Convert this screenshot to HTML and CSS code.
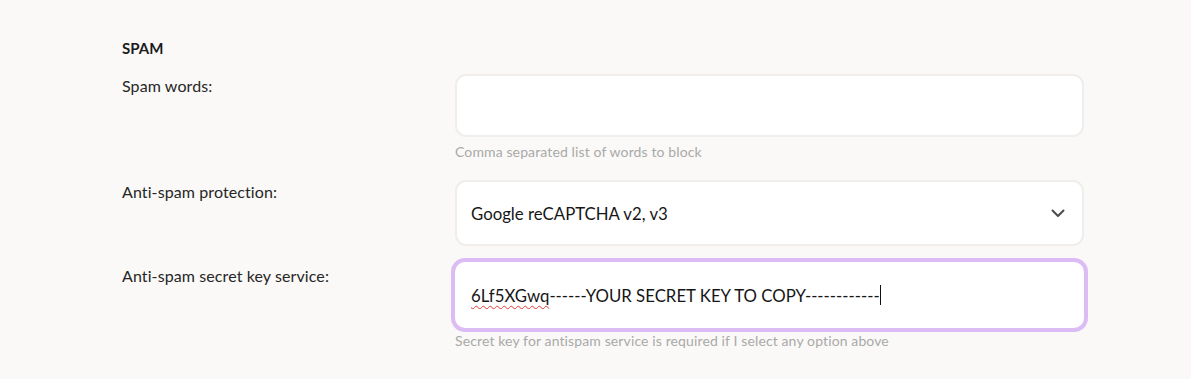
FILE: index.html
```html
<!DOCTYPE html>
<html>
<head>
<meta charset="utf-8">
<link rel="stylesheet" href="styles.css">
</head>
<body>
<div class="page">
  <div class="section-title">SPAM</div>
  <div class="row">
    <div class="label">Spam words:</div>
    <div class="field">
      <div class="box box-text"></div>
      <div class="help">Comma separated list of words to block</div>
    </div>
  </div>
  <div class="row">
    <div class="label label-select">Anti-spam protection:</div>
    <div class="field">
      <div class="box box-select">
        <span class="value">Google reCAPTCHA v2, v3</span>
        <svg class="chev" width="14" height="9" viewBox="0 0 14 9"><path d="M1.5 1.5 L7 7 L12.5 1.5" fill="none" stroke="#4a4a4a" stroke-width="2" stroke-linecap="round" stroke-linejoin="round"/></svg>
      </div>
    </div>
  </div>
  <div class="row">
    <div class="label label-key">Anti-spam secret key service:</div>
    <div class="field">
      <div class="box box-focus">
        <span class="value"><span class="misspelled">6Lf5XGwq</span>------YOUR SECRET KEY TO COPY------------</span><span class="caret"></span>
      </div>
      <div class="help help-key">Secret key for antispam service is required if I select any option above</div>
    </div>
  </div>
</div>
</body>
</html>
```

FILE: styles.css
```css
html, body {
  margin: 0;
  padding: 0;
  background: #faf9f7;
}
body {
  font-family: "Lato", "Liberation Sans", sans-serif;
  color: #1f1f1f;
  width: 1191px;
  height: 379px;
  overflow: hidden;
}
.page {
  padding: 38px 0 0 122px;
}
.section-title {
  font-size: 15px;
  font-weight: 700;
  line-height: 20px;
  color: #1c1c1c;
  margin-bottom: 16px;
}
.row {
  display: grid;
  grid-template-columns: 333px 629px;
  margin-bottom: 18px;
}
.label {
  font-size: 16px;
  line-height: 20px;
  color: #262626;
  letter-spacing: 0.1px;
  padding-top: 2px;
}
.label-key {
  padding-top: 2px;
}
.box {
  box-sizing: border-box;
  background: #fff;
  border: 2px solid #efeeec;
  border-radius: 11px;
  display: flex;
  align-items: center;
  padding: 0 14px;
  font-size: 16.8px;
  color: #161616;
}
.box-text {
  height: 63px;
}
.box-select {
  height: 66px;
  justify-content: space-between;
}
.chev {
  margin-right: 3px;
}
.box-focus {
  height: 66px;
  margin-top: -2px;
  border-color: #ffffff;
  box-shadow: 0 0 0 4px #dcbcf4;
  border-radius: 10px;
}
.misspelled {
  text-decoration: underline wavy #e53935;
  text-decoration-thickness: 1px;
  text-underline-offset: 3px;
}
.caret {
  display: inline-block;
  width: 1px;
  height: 20px;
  background: #111;
}
.help {
  font-size: 14px;
  letter-spacing: 0.12px;
  line-height: 20px;
  color: #a9a9a9;
  margin-top: 5px;
}
.help-key {
  margin-top: 3px;
}
```
